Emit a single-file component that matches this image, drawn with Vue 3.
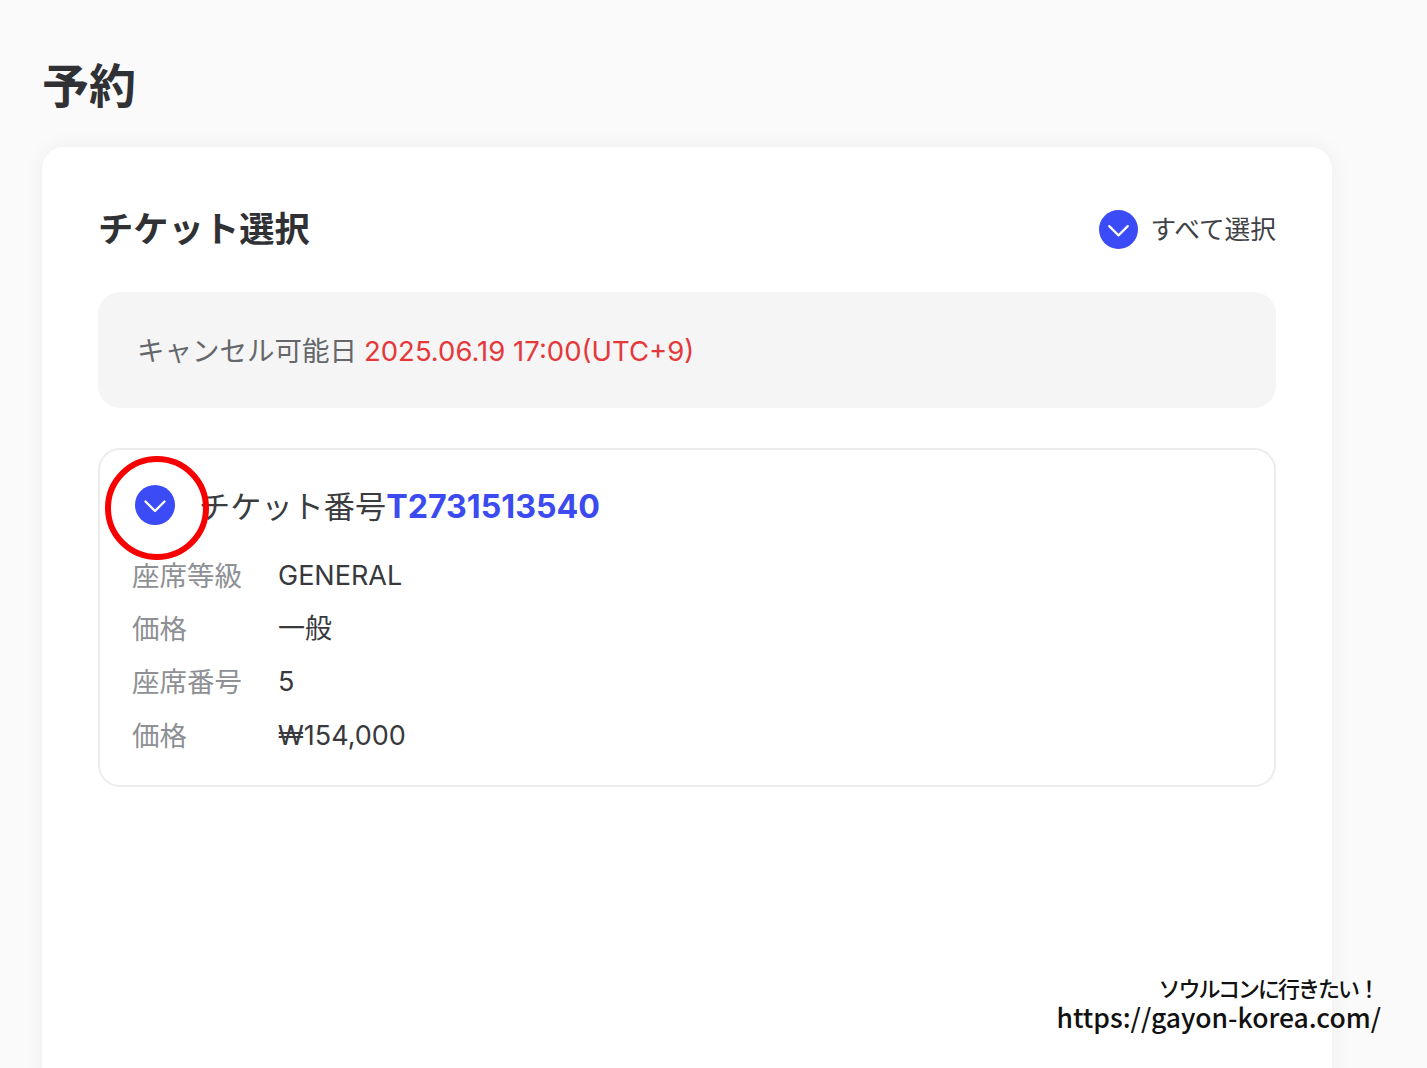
<script setup>
const rows = [
  { label: '座席等級', value: 'GENERAL' },
  { label: '価格', value: '一般' },
  { label: '座席番号', value: '5' },
  { label: '価格', value: '₩154,000' },
]
</script>

<template>
  <div class="page">
    <h1 class="title">予約</h1>
    <section class="card">
      <header class="head">
        <h2 class="head-title">チケット選択</h2>
        <div class="all">
          <svg class="check check-all" viewBox="0 0 40 40"><circle cx="20" cy="20" r="20" fill="#3b4bf5"/><path d="M10.5 16.5 L20 26 L29.5 16.5" fill="none" stroke="#fff" stroke-width="2.3" stroke-linecap="round" stroke-linejoin="round"/></svg>
          <span class="all-label">すべて選択</span>
        </div>
      </header>
      <div class="notice">
        <span class="notice-label">キャンセル可能日</span>
        <span class="notice-date">2025.06.19 17:00(UTC+9)</span>
      </div>
      <article class="ticket">
        <div class="ticket-head">
          <svg class="check" viewBox="0 0 40 40"><circle cx="20" cy="20" r="20" fill="#3b4bf5"/><path d="M10.5 16.5 L20 26 L29.5 16.5" fill="none" stroke="#fff" stroke-width="2.3" stroke-linecap="round" stroke-linejoin="round"/></svg>
          <span class="ticket-name">チケット番号<b>T2731513540</b></span>
          <i class="ring"></i>
        </div>
        <dl class="rows">
          <div v-for="(r, i) in rows" :key="i" class="row">
            <dt>{{ r.label }}</dt>
            <dd>{{ r.value }}</dd>
          </div>
        </dl>
      </article>
    </section>
    <div class="caption">
      <div class="caption-a">ソウルコンに行きたい！</div>
      <div class="caption-b">https://gayon-korea.com/</div>
    </div>
  </div>
</template>

<style>
html, body { margin: 0; background: #fafafa; }
</style>

<style scoped>
.page {
  position: relative;
  height: 1068px;
  overflow: hidden;
  box-sizing: border-box;
  padding: 56px 95px 0 42px;
  background: #fafafa;
  color: #333538;
  font-family: Inter, "Noto Sans CJK JP", sans-serif;
}
.title {
  margin: 0 0 31px;
  font-size: 47px;
  line-height: 60px;
  font-weight: 700;
  color: #2f3134;
}
.card {
  box-sizing: border-box;
  height: 960px;
  padding: 58px 56px 0 56px;
  background: #fff;
  border-radius: 22px;
  box-shadow: 0 0 22px rgba(0, 0, 0, 0.05);
}
.head {
  display: flex;
  align-items: center;
  justify-content: space-between;
  height: 50px;
  margin-bottom: 37px;
}
.head-title {
  margin: 0;
  font-size: 35.3px;
  line-height: 50px;
  font-weight: 700;
  color: #2f3134;
}
.all {
  display: flex;
  align-items: center;
  gap: 12px;
  color: #3f4145;
}
.all-label { font-size: 25.7px; line-height: 36px; }
.check { width: 40px; height: 40px; flex: none; }
.check-all { width: 39px; height: 39px; margin-top: -2px; }
.notice {
  display: flex;
  align-items: center;
  gap: 7px;
  height: 116px;
  padding: 0 39px;
  box-sizing: border-box;
  background: #f5f5f5;
  border-radius: 22px;
  font-size: 27.5px;
  margin-bottom: 40px;
}
.notice-label { color: #65676b; padding-bottom: 2px; }
.notice-date { color: #e5383b; padding-top: 2px; }
.ticket {
  box-sizing: border-box;
  height: 339px;
  padding: 35px 32px 0;
  border: 2px solid #ececec;
  border-radius: 22px;
}
.ticket-head {
  position: relative;
  display: flex;
  align-items: center;
  gap: 24px;
  height: 40px;
  margin-bottom: 24px;
  padding-left: 3px;
}
.ticket-name { font-size: 31.2px; color: #3a3c40; padding-bottom: 2px; }
.ticket-name b { font-weight: 700; color: #3b4bf0; font-size: 32.2px; }
.ring {
  position: absolute;
  left: -27px;
  top: -29px;
  width: 104px;
  height: 104px;
  box-sizing: border-box;
  border: 6px solid #f60000;
  border-radius: 50%;
}
.rows { margin: 0; }
.row {
  display: flex;
  align-items: center;
  height: 53.3px;
  font-size: 27px;
}
dt { width: 146px; color: #8e9094; font-size: 27.5px; line-height: 40px; }
dd { margin: 0; color: #38393d; line-height: 40px; }
.caption {
  position: absolute;
  right: 46px;
  top: 972px;
  text-align: right;
  color: #111;
  font-family: "Noto Sans CJK JP", sans-serif;
}
.caption-a { font-size: 22px; line-height: 31px; letter-spacing: -2px; padding-right: 3px; font-weight: 500; }
.caption-b { font-size: 26.5px; line-height: 27px; font-weight: 500; font-feature-settings: "palt"; }
</style>
